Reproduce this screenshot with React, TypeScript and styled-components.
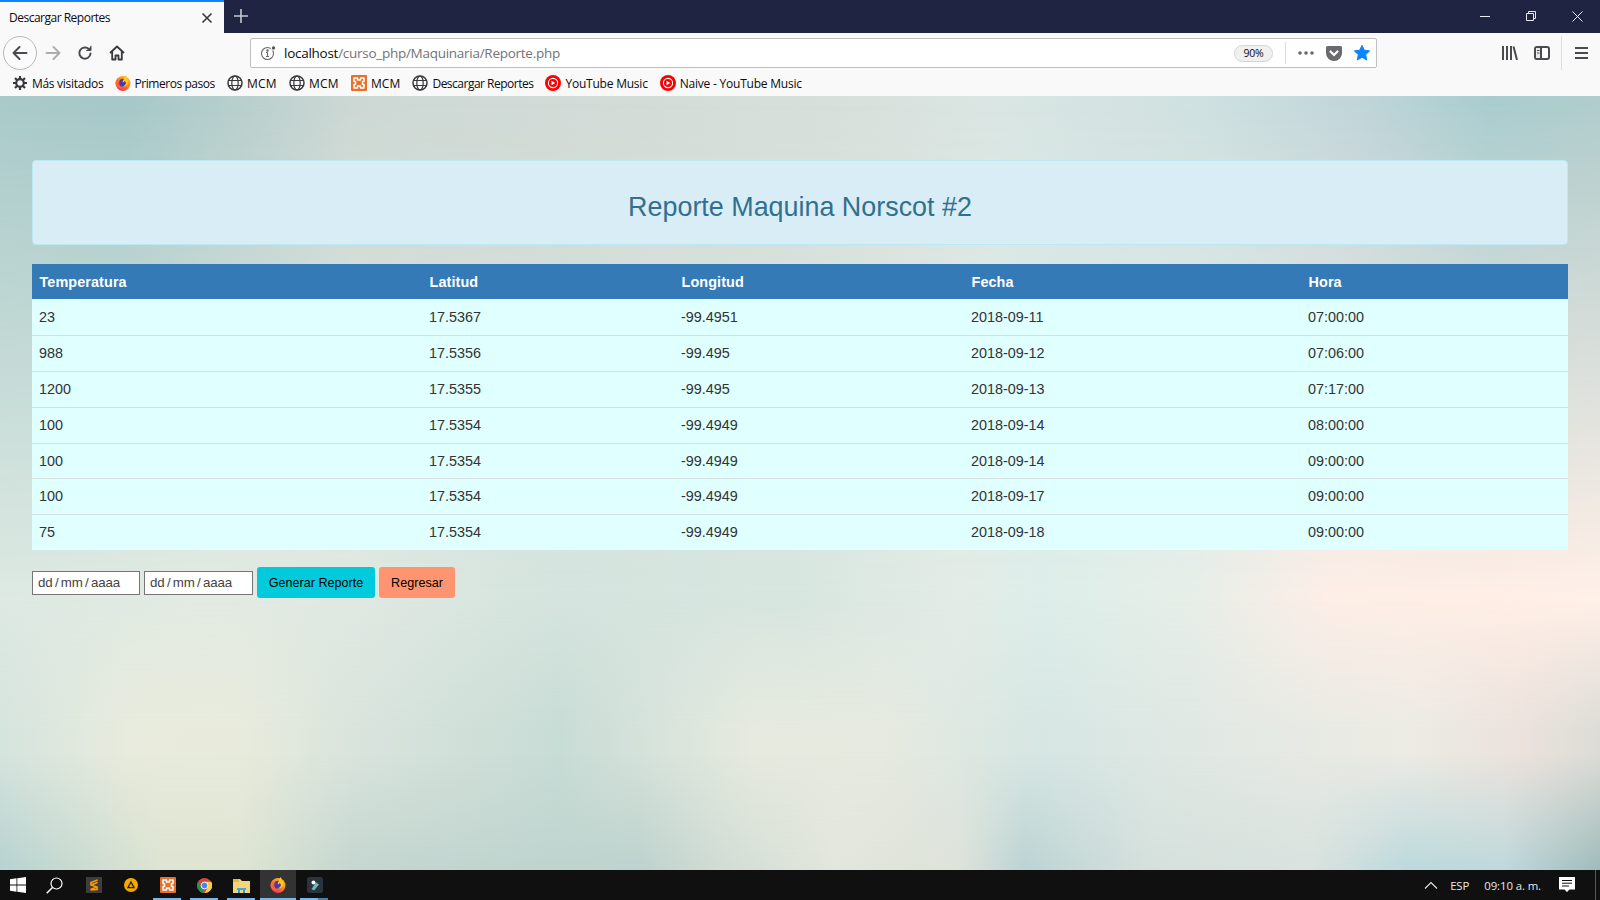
import React from "react";
import styled, { createGlobalStyle } from "styled-components";

const Global = createGlobalStyle`
  html, body { margin: 0; padding: 0; height: 100%; overflow: hidden; }
  #root { height: 100%; }
  * { box-sizing: border-box; }
`;

const Screen = styled.div`
  width: 1600px; height: 900px; display: flex; flex-direction: column;
  font-family: "Open Sans", "Noto Sans", sans-serif; overflow: hidden;
`;
const TabBar = styled.div`
  height: 33px; flex: none; background: #1f2443; display: flex; align-items: stretch;
`;
const Tab = styled.div`
  width: 224px; background: #f9f9fa; border-top: 2px solid #0a84ff; display: flex; align-items: center;
  justify-content: space-between; padding: 0 11px 0 9px; font-size: 12px; color: #0c0c0d; letter-spacing: -0.5px;
`;
const NewTab = styled.div`
  width: 34px; display: flex; align-items: center; justify-content: center; padding-bottom: 2px;
`;
const Spacer = styled.div`flex: 1;`;
const WinBtn = styled.div`
  width: 46px; display: flex; align-items: center; justify-content: center; padding-bottom: 1px;
`;
const NavBar = styled.div`
  height: 40px; flex: none; background: #f9f9fa; display: flex; align-items: center; padding-left: 3px;
`;
const BackCircle = styled.div`
  width: 34px; height: 34px; border-radius: 50%; border: 1px solid #b8b8b8; background: #fbfbfb;
  display: flex; align-items: center; justify-content: center;
`;
const NavIcon = styled.div`
  width: 32px; height: 32px; display: flex; align-items: center; justify-content: center;
`;
const UrlBar = styled.div`
  margin-left: 117px; width: 1127px; height: 30px; border: 1px solid #bfbfbf; border-radius: 2px; background: #fff;
  display: flex; align-items: center; padding-left: 9px; font-size: 13.5px; letter-spacing: -0.27px;
`;
const UrlHost = styled.span`color: #0c0c0d; margin-left: 6px;`;
const UrlPath = styled.span`color: #737373;`;
const Zoom = styled.div`
  width: 39px; height: 17px; margin-left: auto; border: 1px solid #d4d4d4; border-radius: 9px; background: #f0f0f0;
  font-size: 10.5px; color: #0c0c0d; display: flex; align-items: center; justify-content: center; letter-spacing: -0.3px;
`;
const UrlSep = styled.div`width: 1px; height: 22px; background: #dcdcdc; margin: 0 12px;`;
const UrlActions = styled.div`display: flex; align-items: center; gap: 12px; padding-right: 6px;`;
const ToolRight = styled.div`
  margin-left: auto; display: flex; align-items: center; padding-right: 12px; height: 100%;
`;
const SidebarIcon = styled.svg`margin-left: 16px;`;
const ToolSep = styled.div`width: 1px; height: 34px; background: #dedede; margin: 0 13px 0 11px;`;
const BookBar = styled.div`
  height: 23px; flex: none; background: #f9f9fa; display: flex; align-items: center; padding-left: 12px;
  gap: 12px; font-size: 12px; color: #0c0c0d; padding-bottom: 3px;
`;
const Book = styled.div<{ $ls?: number; $gap?: number }>`
  display: flex; align-items: center; gap: ${p => p.$gap ?? 4}px; white-space: nowrap; letter-spacing: ${p => p.$ls ?? -0.22}px;
`;

const Page = styled.div`
  flex: 1; min-height: 0; padding: 64px 32px 0; font-family: "Liberation Sans", Arial, sans-serif;
  position: relative; isolation: isolate;
  background: linear-gradient(90deg, #a9cac9 0%, #a5c8c8 8%, #b8cfcd 15%, #cdd8d4 22%, #d4dcd8 40%, #d9e1dd 55%,
    #dae6e3 62%, #cfe1e1 75%, #c0d5d9 85%, #a9cdcf 93%, #b0cccc 100%);
`;
const Wash = styled.div<{ $stops: string; $mask: string }>`
  position: absolute; inset: 0; z-index: -1;
  background: linear-gradient(90deg, ${p => p.$stops});
  mask-image: linear-gradient(180deg, ${p => p.$mask});
`;
const Jumbo = styled.div`
  height: 85px; background: #d9edf7; border: 1px solid #bce8f1; border-radius: 4px; display: flex;
  align-items: center; justify-content: center; margin-bottom: 19px; padding-top: 11px;
`;
const Title = styled.h3`
  margin: 0; font-weight: 400; font-size: 26.9px; color: #31708f; line-height: 1.1;
`;
const Table = styled.table`
  width: 1536px; border-collapse: collapse; table-layout: fixed; background: #e0ffff; font-size: 14.4px; color: #333;
`;
const Head = styled.th`
  background: #337ab7; color: #fff; font-weight: 700; text-align: left; height: 35px; padding: 0 7.5px; font-size: 14.4px;
  letter-spacing: 0.1px;
`;
const Row = styled.tr`
  height: 36px;
  &:nth-child(5) { height: 35px; }
  & + & td { border-top: 1px solid #d8dfe3; }
`;
const Cell = styled.td`padding: 0 7px;`;
const Form = styled.form`
  display: flex; align-items: center; gap: 4px; margin-top: 17px;
`;
const DateBox = styled.div<{ $w: number }>`
  width: ${p => p.$w}px; height: 24px; border: 1px solid #767676; background: #fff; font-size: 13.3px; color: #444;
  display: flex; align-items: center; padding: 0 0 1px 5px; word-spacing: -1px; letter-spacing: -0.2px;
`;
const Button = styled.button<{ $bg: string; $w: number }>`
  width: ${p => p.$w}px; height: 31px; background: ${p => p.$bg}; border: none; border-radius: 3px; color: #000;
  font: 400 12.6px "Liberation Sans", Arial, sans-serif; padding: 1px 0 0;
`;
const Taskbar = styled.div`
  height: 30px; flex: none; background: #101010; display: flex; align-items: stretch; color: #e8e8e8; font-family: "Open Sans", sans-serif;
`;
const TaskGap = styled.div`width: 3px;`;
const TaskItem = styled.div<{ $w: number; $on?: boolean; $active?: boolean; $split?: boolean }>`
  width: ${p => p.$w}px; display: flex; align-items: center; justify-content: center; position: relative;
  background: ${p => (p.$active ? "#333" : "transparent")};
  ${p => p.$on ? `&::after { content: ""; position: absolute; left: ${p.$active ? 0 : 4}px; right: ${p.$active ? 0 : 5}px; bottom: 0; height: 2px;
    background: ${p.$split ? "linear-gradient(90deg, #76b9ed 65%, #4a7fa8 65%)" : "#76b9ed"}; }` : ""}
`;
const Tray = styled.div`
  margin-left: auto; display: flex; align-items: center; font-size: 11.4px; letter-spacing: -0.1px;
`;
const TrayText = styled.span<{ $m: number }>`margin-left: ${p => p.$m}px; white-space: nowrap;`;
const NotifyIcon = styled.svg`margin-left: 18px;`;
const ShowDesk = styled.div`width: 1px; height: 30px; background: #555; margin: 0 4px 0 20px;`;

const Ic = { fill: "none", stroke: "#4a4a4f", strokeWidth: 2, strokeLinecap: "round" as const, strokeLinejoin: "round" as const };

const Globe = () => (
  <svg width="16" height="16" viewBox="0 0 16 16" fill="none" stroke="#38383d" strokeWidth="1.2">
    <circle cx="8" cy="8" r="7" strokeWidth="1.5" />
    <ellipse cx="8" cy="8" rx="3.2" ry="7" />
    <path d="M1 5.5h14M1 10.5h14" />
  </svg>
);
const Xampp = ({ s = 16 }: { s?: number }) => (
  <svg width={s} height={s} viewBox="0 0 16 16">
    <rect width="16" height="16" rx="1" fill="#e8702a" />
    <path d="M3 3h3.500v2h3V3H13v3.500h-1.500v3H13V13H9.500v-2h-3v2H3V9.500h1.500v-3H3z" fill="none" stroke="#fff" strokeWidth="1.500" strokeLinejoin="round" />
  </svg>
);
const Firefox = ({ id }: { id: string }) => (
  <svg width="16" height="16" viewBox="0 0 16 16">
    <defs>
      <linearGradient id={`${id}a`} x1="1" y1="0" x2="0.2" y2="1">
        <stop offset="0" stopColor="#ffd21f" />
        <stop offset=".45" stopColor="#ff8a1f" />
        <stop offset="1" stopColor="#f0206a" />
      </linearGradient>
    </defs>
    <circle cx="8" cy="8.500" r="7.500" fill={`url(#${id}a)`} />
    <circle cx="8.200" cy="7.800" r="4" fill="#4a3aa8" />
    <path d="M10.500 0c1.200 1.500 1.300 2.700 1 3.600 2 1 2.400 3.400 1.400 5.300-1.200 2.300-4 3.300-6.300 2.200 1.900.2 3.700-.7 4.200-2.400.3-1.100-.3-2.100-1.300-2.600-.2 1-1 1.400-2 1.300.6-2 1.800-4.500 3-7.400z" fill="#ffc91f" />
    <path d="M.8 7c.4-1.800 1.300-3 2.300-3.700-.2 1-.1 1.700.4 2.300-.8.800-1 2.200-.7 3.500.6 2.400 3 4 6 3.500-2.500 1.500-5 .8-6.700-.8C.9 10.700.5 9 .8 7z" fill="#ff6a2a" />
  </svg>
);
const YTM = () => (
  <svg width="16" height="16" viewBox="0 0 16 16">
    <circle cx="8" cy="8" r="8" fill="#f00" />
    <circle cx="8" cy="8" r="4.600" fill="none" stroke="#fff" strokeWidth="1.100" />
    <path d="M6.500 5.800v4.400L10.200 8z" fill="#fff" />
  </svg>
);

const rows = [
  ["23", "17.5367", "-99.4951", "2018-09-11", "07:00:00"],
  ["988", "17.5356", "-99.495", "2018-09-12", "07:06:00"],
  ["1200", "17.5355", "-99.495", "2018-09-13", "07:17:00"],
  ["100", "17.5354", "-99.4949", "2018-09-14", "08:00:00"],
  ["100", "17.5354", "-99.4949", "2018-09-14", "09:00:00"],
  ["100", "17.5354", "-99.4949", "2018-09-17", "09:00:00"],
  ["75", "17.5354", "-99.4949", "2018-09-18", "09:00:00"],
];
const cols = [390, 252, 290, 337, 267];
const heads = ["Temperatura", "Latitud", "Longitud", "Fecha", "Hora"];

export default function App() {
  return (
    <Screen>
      <Global />
      <TabBar>
        <Tab>
          <span>Descargar Reportes</span>
          <svg width="12" height="12" viewBox="0 0 12 12" stroke="#38383d" strokeWidth="1.6"><path d="M1.500 1.500l9 9M10.500 1.500l-9 9" /></svg>
        </Tab>
        <NewTab>
          <svg width="14" height="14" viewBox="0 0 14 14" stroke="#c8c9d2" strokeWidth="1.6"><path d="M7 0v14M0 7h14" /></svg>
        </NewTab>
        <Spacer />
        <WinBtn><svg width="10" height="10" viewBox="0 0 10 10" stroke="#e8e8ee"><path d="M0 5.500h10" /></svg></WinBtn>
        <WinBtn><svg width="10" height="10" viewBox="0 0 10 10" fill="none" stroke="#e8e8ee"><path d="M.5 2.500h7v7h-7zM2.500 2.500V.5h7v7h-2" /></svg></WinBtn>
        <WinBtn><svg width="11" height="11" viewBox="0 0 11 11" stroke="#e8e8ee"><path d="M.5.5l10 10M10.500.5l-10 10" /></svg></WinBtn>
      </TabBar>
      <NavBar>
        <BackCircle>
          <svg width="16" height="16" viewBox="0 0 16 16" {...Ic}><path d="M14.500 8h-13M7.500 2l-6 6 6 6" /></svg>
        </BackCircle>
        <NavIcon>
          <svg width="16" height="16" viewBox="0 0 16 16" {...Ic} stroke="#adadb0"><path d="M1.500 8h13M8.500 2l6 6-6 6" /></svg>
        </NavIcon>
        <NavIcon>
          <svg width="16" height="16" viewBox="0 0 16 16" {...Ic}><path d="M13.500 8.500a5.600 5.600 0 1 1-1.500-4.300" /><path d="M14 1.200v4.300H9.700" fill="#4a4a4f" strokeWidth="1" /></svg>
        </NavIcon>
        <NavIcon>
          <svg width="16" height="16" viewBox="0 0 16 16" fill="none" stroke="#38383d" strokeWidth="1.800" strokeLinejoin="round"><path d="M1 8l7-6.500L15 8M3.200 6.500V14.500h3.300v-4h3v4h3.300V6.500" /></svg>
        </NavIcon>
        <UrlBar>
          <svg width="18" height="16" viewBox="0 0 18 16" fill="none" stroke="#6b6b6b" strokeWidth="1.100"><circle cx="7.500" cy="8.500" r="6" /><path d="M7.500 7.500v4M6 7.500h1.500M6 11.500h3" /><circle cx="7.500" cy="5.500" r=".7" fill="#6b6b6b" /><circle cx="13.500" cy="3" r="2.200" fill="#555" stroke="#fff" /></svg>
          <UrlHost>localhost</UrlHost>
          <UrlPath>/curso_php/Maquinaria/Reporte.php</UrlPath>
          <Zoom>90%</Zoom>
          <UrlSep />
          <UrlActions>
            <svg width="16" height="4" viewBox="0 0 16 4" fill="#6a6a6e"><circle cx="2" cy="2" r="1.800" /><circle cx="8" cy="2" r="1.800" /><circle cx="14" cy="2" r="1.800" /></svg>
            <svg width="16" height="15" viewBox="0 0 16 15"><path d="M1.500 0h13A1.500 1.500 0 0 1 16 1.500V7a8 8 0 0 1-16 0V1.500A1.500 1.500 0 0 1 1.500 0z" fill="#6a6a6e" /><path d="M4.500 5.500L8 9l3.500-3.500" fill="none" stroke="#fff" strokeWidth="2.200" strokeLinecap="round" /></svg>
            <svg width="16" height="16" viewBox="0 0 16 16"><path d="M8 .3l2.300 4.900 5.400.7-4 3.700 1 5.400L8 12.300l-4.700 2.700 1-5.400-4-3.700 5.400-.7z" fill="#0a84ff" stroke="#0a84ff" strokeLinejoin="round" /></svg>
          </UrlActions>
        </UrlBar>
        <ToolRight>
          <svg width="16" height="14" viewBox="0 0 16 14" stroke="#4a4a4f" strokeWidth="2"><path d="M1 0v14M5 0v14M9 0v14M11.500.5L15 14" /></svg>
          <SidebarIcon width="16" height="14" viewBox="0 0 16 14"><rect x="1" y="1" width="14" height="12" rx="2" fill="#fff" stroke="#4a4a4f" strokeWidth="2" /><path d="M2 2h4v10H2z" fill="#e9e9e9" /><path d="M7 1v12" stroke="#4a4a4f" strokeWidth="2" /><path d="M3 4.500h2.500M3 7h2.500" stroke="#4a4a4f" /></SidebarIcon>
          <ToolSep />
          <svg width="13" height="12" viewBox="0 0 13 12" stroke="#4a4a4f" strokeWidth="2"><path d="M0 1h13M0 6h13M0 11h13" /></svg>
        </ToolRight>
      </NavBar>
      <BookBar>
        <Book $ls={-0.3}>
          <svg width="16" height="16" viewBox="0 0 16 16" fill="none" stroke="#38383d"><circle cx="8" cy="8" r="3.800" strokeWidth="2.200" /><path d="M8 1v3M8 12v3M1 8h3M12 8h3M3 3l2 2M11 11l2 2M13 3l-2 2M5 11l-2 2" strokeWidth="2.200" /></svg>
          Más visitados
        </Book>
        <Book $ls={-0.44} $gap={3}><Firefox id="fb" />Primeros pasos</Book>
        <Book $ls={0.3}><Globe />MCM</Book>
        <Book $ls={0.3}><Globe />MCM</Book>
        <Book $ls={0.1}><Xampp />MCM</Book>
        <Book $ls={-0.5}><Globe />Descargar Reportes</Book>
        <Book><YTM />YouTube Music</Book>
        <Book><YTM />Naive - YouTube Music</Book>
      </BookBar>
      <Page>
        <Wash
          $stops="#dde9e2 0%, #e3ebe3 13%, #e0e9e2 22%, #d5e4de 35%, #d8e6e0 50%, #e3ece6 60%, #ddeeea 65%, #e8eee8 75%, #fdeee7 83%, #ffeee6 93%, #fff0e8 100%"
          $mask="transparent 0%, #000 65%"
        />
        <Wash
          $stops="#d5e4dd 0%, #e8ebdd 8%, #e8ebdc 15%, #d9e4dc 22%, #c8dcd6 35%, #e6eadf 47%, #e6eae0 55%, #d6e6e3 65%, #e4e9e3 78%, #ecebe4 88%, #ebe2dc 95%, #dcdcd6 100%"
          $mask="transparent 65%, #000 82%"
        />
        <Wash
          $stops="#b6d2d0 0%, #dde4d0 10%, #dde4d1 15%, #c4d6d0 22%, #bdd2cd 40%, #d0dcd4 45%, #e2e6dc 52%, #dde2da 60%, #bbd3d3 64%, #d5e0dc 72%, #d8e2de 82%, #bcd8dc 88%, #bfd8db 94%, #9fbbba 100%"
          $mask="transparent 85%, #000 100%"
        />
        <Jumbo><Title>Reporte Maquina Norscot #2</Title></Jumbo>
        <Table>
          <colgroup>{cols.map((w, i) => <col key={i} width={w} />)}</colgroup>
          <thead><tr>{heads.map(h => <Head key={h}>{h}</Head>)}</tr></thead>
          <tbody>
            {rows.map((r, i) => <Row key={i}>{r.map((c, j) => <Cell key={j}>{c}</Cell>)}</Row>)}
          </tbody>
        </Table>
        <Form>
          <DateBox $w={108}>dd / mm / aaaa</DateBox>
          <DateBox $w={109}>dd / mm / aaaa</DateBox>
          <Button type="button" $bg="#00cadc" $w={118}>Generar Reporte</Button>
          <Button type="button" $bg="#ff9470" $w={76}>Regresar</Button>
        </Form>
      </Page>
      <Taskbar>
        <TaskItem $w={36}>
          <svg width="16" height="16" viewBox="0 0 16 16" fill="#fff"><path d="M0 2.200l6.500-.9v6.300H0zM7.300 1.200L16 0v7.600H7.300zM0 8.400h6.500v6.300L0 13.800zM7.300 8.400H16V16l-8.700-1.200z" /></svg>
        </TaskItem>
        <TaskItem $w={36}>
          <svg width="17" height="17" viewBox="0 0 17 17" fill="none" stroke="#fff" strokeWidth="1.200"><circle cx="10.500" cy="6.500" r="5.500" /><path d="M6.500 10.500L.7 16.300" strokeWidth="1.500" /></svg>
        </TaskItem>
        <TaskGap />
        <TaskItem $w={37}>
          <svg width="16" height="16" viewBox="0 0 16 16"><rect width="16" height="16" fill="#3d3d3d" /><path d="M11.500 3L5 5.500v2.500l6 2v2.500L4.500 13M5 8l6.500-2.500M11 10l-6.500 2.500" fill="none" stroke="#ff9800" strokeWidth="1.700" /></svg>
        </TaskItem>
        <TaskItem $w={37}>
          <svg width="14" height="14" viewBox="0 0 16 16"><circle cx="8" cy="8" r="8" fill="#f5a800" /><path d="M8 4.500l3.500 6.500h-7z" fill="none" stroke="#222" strokeWidth="1.500" /></svg>
        </TaskItem>
        <TaskItem $w={37} $on><Xampp /></TaskItem>
        <TaskItem $w={37} $on>
          <svg width="15" height="15" viewBox="0 0 16 16"><circle cx="8" cy="8" r="8" fill="#db4437" /><path d="M8 16a8 8 0 0 1-6.900-12L4.500 10 8 16z" fill="#0f9d58" /><path d="M8 4h7.200A8 8 0 0 1 8 16l3.500-6z" fill="#ffcd40" /><circle cx="8" cy="8" r="3.600" fill="#4285f4" stroke="#fff" /></svg>
        </TaskItem>
        <TaskItem $w={37} $on>
          <svg width="17" height="15" viewBox="0 0 17 15"><path d="M0 1h7l2 2h8v12H0z" fill="#f4d67a" /><path d="M0 1h6v3H0z" fill="#e9b93e" /><path d="M6 15v-4h5v4" fill="none" stroke="#2e9fd8" strokeWidth="2" /><path d="M4 10h9v2H4z" fill="#3fa9e0" /></svg>
        </TaskItem>
        <TaskItem $w={36} $on $active><Firefox id="ft" /></TaskItem>
        <TaskItem $w={37} $on $split>
          <svg width="16" height="16" viewBox="0 0 16 16"><rect width="16" height="16" rx="2.500" fill="#2a3340" /><path d="M9 5.500l3 2-5 6-2.500-1.500z" fill="#6fb8b8" /><circle cx="6.500" cy="5.500" r="2" fill="#fff" /></svg>
        </TaskItem>
        <Tray>
          <svg width="14" height="8" viewBox="0 0 14 8" fill="none" stroke="#e8e8e8" strokeWidth="1.100"><path d="M1 7.500l6-6 6 6" /></svg>
          <TrayText $m={12}>ESP</TrayText>
          <TrayText $m={15}>09:10 a. m.</TrayText>
          <NotifyIcon width="16" height="16" viewBox="0 0 16 16"><path d="M0 0h16v12.500h-5.500L8 15l-2.500-2.500H0z" fill="#fff" /><path d="M3 3.500h10M3 6.200h10M3 9h7" stroke="#101010" /></NotifyIcon>
          <ShowDesk />
        </Tray>
      </Taskbar>
    </Screen>
  );
}
